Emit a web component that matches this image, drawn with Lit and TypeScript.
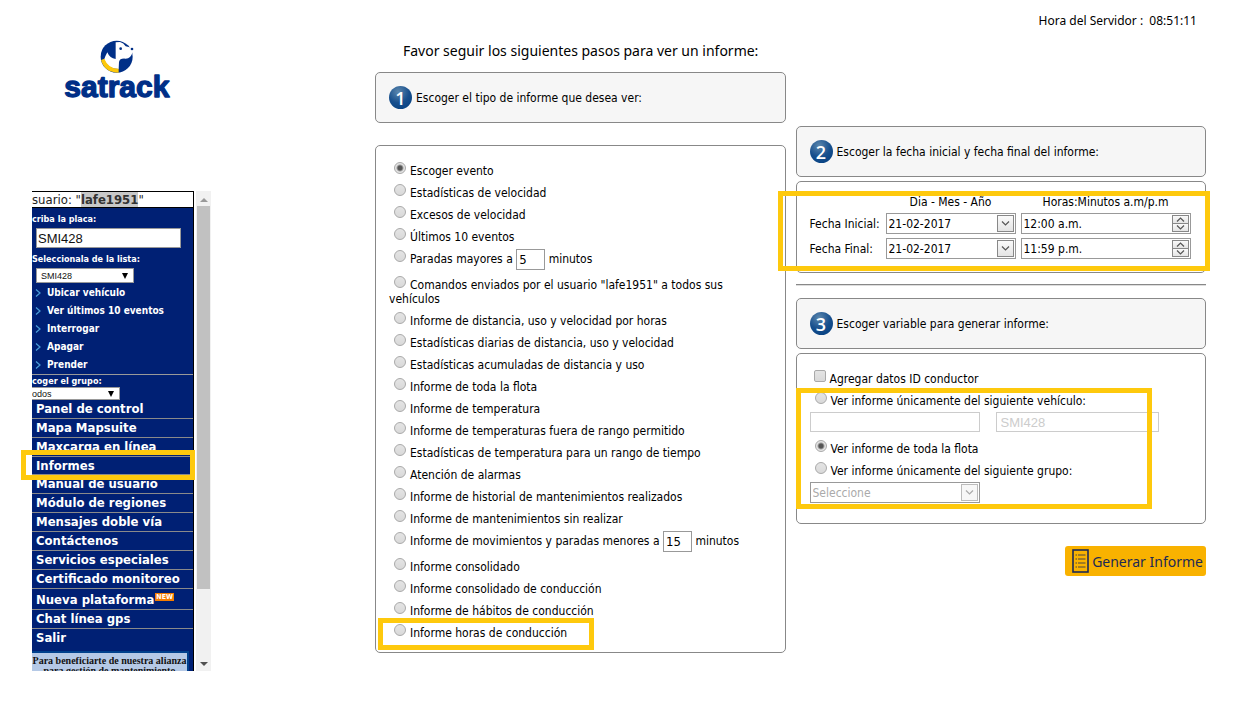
import { LitElement, html, css, svg, nothing } from "lit";
import { customElement, property } from "lit/decorators.js";

const chevron = (d: string) => svg`<path d=${d} fill="none" stroke="currentColor" stroke-width="1.2" />`;

const control = css`
  * { box-sizing: border-box; }
  input, select, button { font: inherit; color: inherit; margin: 0; border-radius: 0; }
  input[type="radio"], input[type="checkbox"] {
    appearance: none; width: 12px; height: 12px; margin: -4px 4px 0 5px; vertical-align: 1px;
    border: 1px solid #a9a9a9; background: linear-gradient(#e4e4e4, #d9d9d9);
  }
  input[type="radio"] { border-radius: 50%; }
  input[type="checkbox"] { border-radius: 2px; margin-left: 4px; }
  input[type="radio"]:checked {
    background: radial-gradient(circle, #555 0 2px, #e4e4e4 4px);
  }
`;

interface Report { label: string; minutes?: string; checked?: boolean }

const reports: Report[] = [
  { label: "Escoger evento", checked: true },
  { label: "Estadísticas de velocidad" },
  { label: "Excesos de velocidad" },
  { label: "Últimos 10 eventos" },
  { label: "Paradas mayores a", minutes: "5" },
  { label: 'Comandos enviados por el usuario "lafe1951" a todos sus vehículos' },
  { label: "Informe de distancia, uso y velocidad por horas" },
  { label: "Estadísticas diarias de distancia, uso y velocidad" },
  { label: "Estadísticas acumuladas de distancia y uso" },
  { label: "Informe de toda la flota" },
  { label: "Informe de temperatura" },
  { label: "Informe de temperaturas fuera de rango permitido" },
  { label: "Estadísticas de temperatura para un rango de tiempo" },
  { label: "Atención de alarmas" },
  { label: "Informe de historial de mantenimientos realizados" },
  { label: "Informe de mantenimientos sin realizar" },
  { label: "Informe de movimientos y paradas menores a", minutes: "15" },
  { label: "Informe consolidado" },
  { label: "Informe consolidado de conducción" },
  { label: "Informe de hábitos de conducción" },
  { label: "Informe horas de conducción" },
];

const actions = ["Ubicar vehículo", "Ver últimos 10 eventos", "Interrogar", "Apagar", "Prender"];
const menu = [
  "Panel de control", "Mapa Mapsuite", "Maxcarga en línea", "Informes", "Manual de usuario",
  "Módulo de regiones", "Mensajes doble vía", "Contáctenos", "Servicios especiales",
  "Certificado monitoreo", "Nueva plataforma", "Chat línea gps", "Salir",
];

@customElement("satrack-logo")
class SatrackLogo extends LitElement {
  static styles = css`
    :host { display: block; }
    svg { display: block; width: 110px; height: 67px; }
    .word { font: bold 90px "Liberation Sans", sans-serif; fill: #002f87; stroke: #002f87; stroke-width: 4px; stroke-linejoin: round; }
  `;
  render() {
    return html`<svg viewBox="162 54 330 201" role="img" aria-label="satrack">
      <circle cx="320" cy="110" r="48" fill="#002f87" />
      <path d="M317 67 L330 66 Q341 69 347 79 L365 83 Q370 88 367 98 Q363 114 347 116 Q329 114 327 126 L326 147 Q294 147 282 119 Q286 108 292 97 Q299 115 317 117 Z" fill="#fff" />
      <circle cx="332" cy="86" r="4" fill="#002f87" />
      <circle cx="366" cy="87" r="4" fill="#002f87" />
      <path d="M273 120 L283 116 Q294 146 326 146 L326 158 Q284 158 273 120 Z" fill="#fdc80a" />
      <text class="word" x="163" y="231">satrack</text>
    </svg>`;
  }
}

@customElement("step-heading")
class StepHeading extends LitElement {
  @property() number = "";
  @property() text = "";
  static styles = css`
    :host { display: block; }
    .step {
      display: flex; align-items: center; gap: 4px; box-sizing: border-box; min-height: 51px; padding: 0 13px;
      border: 1px solid #888; border-radius: 5px; background: #f6f6f6;
    }
    .badge {
      display: grid; place-items: center; width: 23px; height: 23px; border-radius: 50%; flex: none;
      color: #fff; font: 600 18px/22px "Open Sans", sans-serif;
      background: radial-gradient(circle at 40% 25%, #5c87ad 0, #174f8d 50%, #003c7e 100%);
    }
    h2 { margin: 0; font-size: 12px; font-weight: normal; }
  `;
  render() {
    return html`<div class="step"><span class="badge">${this.number}</span><h2>${this.text}</h2></div>`;
  }
}

@customElement("side-menu")
class SideMenu extends LitElement {
  static styles = [control, css`
    :host { display: block; position: relative; }
    .frame { display: flex; height: 480px; overflow: hidden; background: #f1f1f1; }
    .content { flex: none; width: 162px; height: 100%; overflow: hidden; background: #002074; color: #fff; border-right: 1px solid #000; }
    .user { height: 17px; border: solid #000; border-width: 1px 0; background: #fff; color: #222; font-size: 13px; line-height: 16px; white-space: nowrap; }
    .user b { background: #c8c8c8; color: #333; }
    .field { display: block; font-size: 9px; font-weight: bold; white-space: nowrap; line-height: 14px; padding-top: 4px; }
    .plate { display: block; width: 145px; height: 20px; margin: 2px 4px 0; padding: 0 1px; border: 1px solid #999; background: #fff; color: #111; font: 13px "Liberation Sans", sans-serif; }
    .picker { position: relative; width: 98px; margin: 2px 4px 0; color: #111; }
    .picker select { appearance: none; display: block; width: 100%; height: 15px; padding: 0 4px; border: 1px solid #999; background: #fff; font: 9px "Liberation Sans", sans-serif; }
    .picker::after { content: ""; position: absolute; right: 6px; top: 5px; border: solid transparent; border-width: 6px 3px 0; border-top-color: #000; pointer-events: none; }
    .picker.group { width: 88px; margin: 0; }
    .picker.group select { height: 13px; padding: 0; border-left: 0; }
    .picker.group::after { top: 4px; }
    ul { list-style: none; margin: 0; padding: 0; }
    .actions { padding-top: 1px; border-bottom: 1px solid #999; }
    .actions a { display: flex; align-items: center; gap: 6px; height: 18px; padding-left: 3px; font-size: 10px; font-weight: bold; }
    .actions svg { width: 6px; height: 8px; color: #4a9ed8; }
    .group-label { padding-top: 0; line-height: 12px; }
    a { color: inherit; text-decoration: none; white-space: nowrap; }
    .menu li { height: 19px; border-bottom: 1px solid #8a8a8a; font-size: 13px; font-weight: bold; line-height: 18px; padding-left: 4px; }
    .menu li.current { height: 18px; line-height: 17px; }
    .menu li.wide { height: 21px; line-height: 22px; }
    .menu li:last-child { border: 0; height: 22px; }
    .new { display: inline-block; margin-left: 1px; padding: 0 1px; background: #f57c00; color: #fff; font-size: 7px; line-height: 8px; vertical-align: 5px; }
    .banner { margin-right: 4px; border: 2px solid #00408c; border-left: 0; background: #b5c9e6; color: #111; font: bold 10px/10px "Liberation Serif", serif; text-align: center; padding-top: 3px; white-space: nowrap; }
    .bar { display: flex; flex-direction: column; align-items: center; justify-content: space-between; flex: 1; padding: 7px 0 5px; }
    .thumb { width: 13px; flex: 1; margin: 4px 0 73px; background: #c1c1c1; }
    .up, .down { border: 4px solid transparent; border-top-width: 0; border-bottom-color: #999; }
    .down { border-width: 4px 4px 0; border-top-color: #505050; }
    .mark { position: absolute; top: 259px; left: -11px; width: 174px; height: 30px; border: 5px solid #fec90d; pointer-events: none; }
    .gutter { width: 2px; background: #fff; }
  `];
  render() {
    return html`
      <div class="frame">
        <nav class="content">
          <div class="user">suario: "<b>lafe1951</b>"</div>
          <label class="field" for="plate">criba la placa:</label>
          <input class="plate" id="plate" value="SMI428" />
          <label class="field" for="list">Seleccionala de la lista:</label>
          <div class="picker"><select id="list"><option>SMI428</option></select></div>
          <ul class="actions">
            ${actions.map((a) => html`<li><a href="#"><svg viewBox="0 0 6 8">${chevron("M1 0.5 L5 4 L1 7.5")}</svg>${a}</a></li>`)}
          </ul>
          <label class="field group-label" for="group">coger el grupo:</label>
          <div class="picker group"><select id="group"><option>odos</option></select></div>
          <ul class="menu">
            ${menu.map((m) => {
              const isNew = m === "Nueva plataforma";
              return html`<li class=${isNew ? "wide" : m === "Informes" ? "current" : ""}><a href="#">${m}${isNew ? html`<span class="new">NEW</span>` : nothing}</a></li>`;
            })}
          </ul>
          <div class="banner">Para beneficiarte de nuestra alianza<br />para gestión de mantenimiento</div>
        </nav>
        <div class="gutter"></div>
        <div class="bar"><i class="up"></i><i class="thumb"></i><i class="down"></i></div>
      </div>
      <div class="mark"></div>`;
  }
}

@customElement("report-types")
class ReportTypes extends LitElement {
  static styles = [control, css`
    :host { display: block; }
    ul { list-style: none; margin: 0; padding: 14px 13px 8px; border: 1px solid #888; border-radius: 5px; position: relative; }
    li { padding: 4px 0; line-height: 14px; }
    li.timed { padding: 0 0 4px; line-height: 22px; }
    .minutes { width: 29px; height: 21px; margin: -1px 0; padding: 0 2px; border: 1px solid #999; font-size: 13px; vertical-align: middle; }
    .mark { position: absolute; left: 2px; bottom: 2px; width: 216px; height: 32px; border: 5px solid #fec90d; pointer-events: none; }
  `];
  render() {
    return html`<ul>
      ${reports.map((r, i) => html`<li class=${r.minutes ? "timed" : ""}><input type="radio" name="report" id="r${i}" ?checked=${r.checked} /><label for="r${i}">${r.label}</label>${r.minutes
        ? html` <input class="minutes" aria-label="minutos" .value=${r.minutes} /> minutos` : nothing}</li>`)}
      <div class="mark"></div>
    </ul>`;
  }
}

@customElement("date-range")
class DateRange extends LitElement {
  static styles = [control, css`
    :host { display: block; }
    .card { position: relative; min-height: 92px; padding: 13px; border: 1px solid #888; border-radius: 5px; }
    .grid { display: grid; grid-template-columns: 71px 130px 170px; column-gap: 5px; row-gap: 4px; align-items: center; }
    .head { text-align: center; line-height: 14px; }
    .box { display: flex; height: 21px; border: 1px solid #999; padding: 1px; background: #fff; }
    .box input { flex: 1; min-width: 0; border: 0; padding: 0 1px; outline: 0; background: none; }
    button { display: grid; place-items: center; width: 17px; padding: 0; border: 1px solid #888; background: linear-gradient(#fafafa, #e4e4e4); color: #555; }
    button svg { width: 9px; height: 5px; }
    .spin { display: flex; flex-direction: column; width: 17px; }
    .spin button { flex: 1; min-height: 0; }
    .spin button + button { border-top: 0; }
    .mark { position: absolute; left: -19px; right: -5px; top: 9px; height: 80px; border: 5px solid #fec90d; pointer-events: none; }
  `];
  row(id: string, label: string, time: string) {
    return html`
      <label for=${id}>${label}</label>
      <div class="box"><input id=${id} value="21-02-2017" /><button aria-label="Calendario"><svg viewBox="0 0 9 5">${chevron("M1 0.5 L4.5 4 L8 0.5")}</svg></button></div>
      <div class="box"><input aria-label="${label} hora" .value=${time} />
        <span class="spin">
          <button aria-label="Más"><svg viewBox="0 0 9 5">${chevron("M1 4.5 L4.5 1 L8 4.5")}</svg></button>
          <button aria-label="Menos"><svg viewBox="0 0 9 5">${chevron("M1 0.5 L4.5 4 L8 0.5")}</svg></button>
        </span>
      </div>`;
  }
  render() {
    return html`<div class="card">
      <div class="grid">
        <span></span><span class="head">Dia - Mes - Año</span><span class="head">Horas:Minutos a.m/p.m</span>
        ${this.row("from", "Fecha Inicial:", "12:00 a.m.")}
        ${this.row("to", "Fecha Final:", "11:59 p.m.")}
      </div>
      <div class="mark"></div>
    </div>`;
  }
}

@customElement("report-scope")
class ReportScope extends LitElement {
  static styles = [control, css`
    :host { display: block; }
    .card { position: relative; min-height: 171px; padding: 14px 13px; border: 1px solid #888; border-radius: 5px; }
    .option { padding: 4px 0; line-height: 14px; }
    .vehicle { display: flex; gap: 16px; padding: 0 0 6px; }
    .vehicle > * { height: 20px; border: 1px solid #ccc; background: #fff; }
    .vehicle input { width: 170px; }
    .vehicle select { width: 163px; padding: 0 4px; appearance: none; color: #ccc; opacity: 1; font: 13px "Liberation Sans", sans-serif; }
    .combo { position: relative; width: 170px; color: #aaa; }
    .combo select { display: block; width: 100%; height: 21px; padding: 0 2px; appearance: none; border: 1px solid #999; background: #fff; opacity: 1; }
    .arrow { position: absolute; right: 2px; top: 2px; display: grid; place-items: center; width: 17px; height: 17px; border: 1px solid #bbb; background: #f7f7f7; pointer-events: none; }
    .arrow svg { width: 9px; height: 5px; }
    .mark { position: absolute; left: -1px; top: 34px; width: 356px; height: 121px; border: 5px solid #fec90d; pointer-events: none; }
  `];
  render() {
    return html`<div class="card">
      <div class="option"><input type="checkbox" id="driver" /><label for="driver">Agregar datos ID conductor</label></div>
      <div class="option"><input type="radio" name="scope" id="one" /><label for="one">Ver informe únicamente del siguiente vehículo:</label></div>
      <div class="vehicle">
        <input disabled aria-label="Buscar vehículo" />
        <select disabled aria-label="Vehículo"><option>SMI428</option></select>
      </div>
      <div class="option"><input type="radio" name="scope" id="all" checked /><label for="all">Ver informe de toda la flota</label></div>
      <div class="option"><input type="radio" name="scope" id="grp" /><label for="grp">Ver informe únicamente del siguiente grupo:</label></div>
      <div class="combo">
        <select disabled aria-label="Grupo"><option>Seleccione</option></select>
        <span class="arrow"><svg viewBox="0 0 9 5">${chevron("M1 0.5 L4.5 4 L8 0.5")}</svg></span>
      </div>
      <div class="mark"></div>
    </div>`;
  }
}

@customElement("app-root")
class AppRoot extends LitElement {
  static styles = css`
    :host { display: block; min-height: 100vh; background: #fff; color: #000; font: 12px/14px "DejaVu Sans Condensed", "DejaVu Sans", sans-serif; }
    .page { display: flex; padding: 0 42px 0 32px; gap: 164px; }
    aside { width: 179px; flex: none; padding-top: 38px; }
    .logo { margin: 0 0 86px 32px; }
    main { flex: 1; min-width: 0; }
    .clock { margin: 0; padding: 12px 9px 0; text-align: right; font-family: "Noto Sans", sans-serif; line-height: 18px; white-space: pre; }
    .columns { display: grid; grid-template-columns: minmax(0, 1fr) minmax(0, 1fr); gap: 10px; align-items: start; }
    h1 { margin: 12px 0 12px 28px; font-family: "Noto Sans", sans-serif; font-size: 14px; line-height: 18px; font-weight: normal; white-space: nowrap; }
    .types { margin-top: 22px; }
    .second { display: flex; flex-direction: column; gap: 4px; padding-top: 96px; }
    hr { width: 100%; box-sizing: border-box; height: 2px; margin: 7px 0 8px; border: 0; border-top: 1px solid #888; background: #ddd; }
    .go {
      align-self: flex-end; display: flex; align-items: center; gap: 3px; height: 30px; margin-top: 18px; padding: 0 3px 0 7px;
      border: 0; border-radius: 3px; background: #f9b200; color: #1d2a55; font: 14px "Noto Sans", sans-serif; white-space: nowrap;
    }
    .go svg { width: 17px; height: 24px; }
  `;
  render() {
    return html`<div class="page">
      <aside><satrack-logo class="logo"></satrack-logo><side-menu></side-menu></aside>
      <main>
        <p class="clock">Hora del Servidor :  08:51:11</p>
        <div class="columns">
          <section>
            <h1>Favor seguir los siguientes pasos para ver un informe:</h1>
            <step-heading number="1" text="Escoger el tipo de informe que desea ver:"></step-heading>
            <report-types class="types"></report-types>
          </section>
          <section class="second">
            <step-heading number="2" text="Escoger la fecha inicial y fecha final del informe:"></step-heading>
            <date-range></date-range>
            <hr />
            <step-heading number="3" text="Escoger variable para generar informe:"></step-heading>
            <report-scope></report-scope>
            <button class="go">
              <svg viewBox="0 0 17 24" fill="none" stroke="#1d2a55"><rect x="1" y="1" width="15" height="22" stroke-width="1.6" />
                <path d="M3.5 6h1.5M6 6h7.5M3.5 10h1.5M6 10h7.5M3.5 14h1.5M6 14h7.5M3.5 18h1.5M6 18h7.5" stroke-width="0.8" /></svg>
              Generar Informe
            </button>
          </section>
        </div>
      </main>
    </div>`;
  }
}
